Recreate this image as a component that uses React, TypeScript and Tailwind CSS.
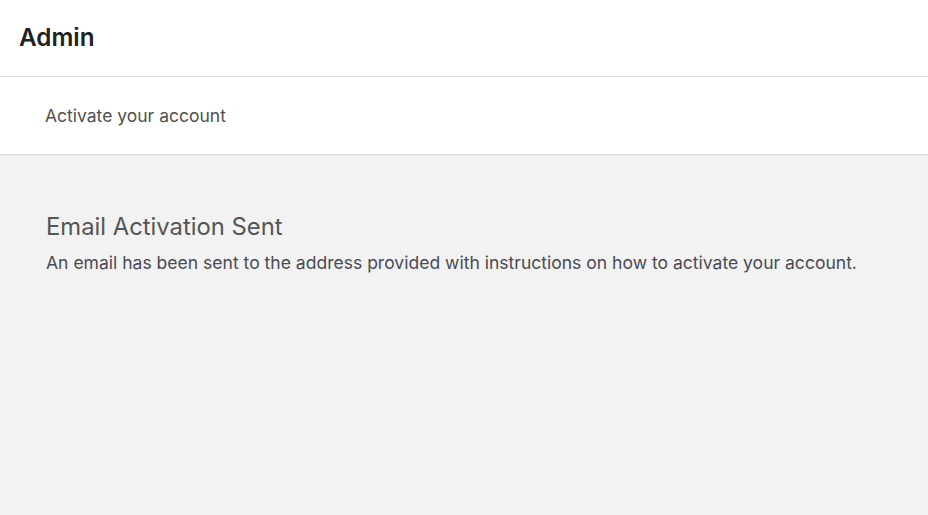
export default function App() {
  return (
    <div className="flex h-[515px] flex-col bg-[#f2f2f2] font-['Inter',sans-serif]">
      <header className="flex h-[77px] items-center border-b border-[#dedede] bg-white px-[19px] pb-[3px]">
        <h1 className="text-[24.3px] font-semibold leading-[32px] text-[#222]">Admin</h1>
      </header>
      <div className="flex h-[78px] items-center border-b border-[#d6d6d6] bg-white px-[45px]">
        <p className="pt-[2px] text-[17.5px] text-[#505050]">Activate your account</p>
      </div>
      <main className="px-[46px] pt-[56px]">
        <h2 className="text-[23.8px] leading-[32px] text-[#555]">Email Activation Sent</h2>
        <p className="mt-[7px] text-[17.55px] leading-[26px] text-[#4a4a55]">
          An email has been sent to the address provided with instructions on how to activate your account.
        </p>
      </main>
    </div>
  );
}
